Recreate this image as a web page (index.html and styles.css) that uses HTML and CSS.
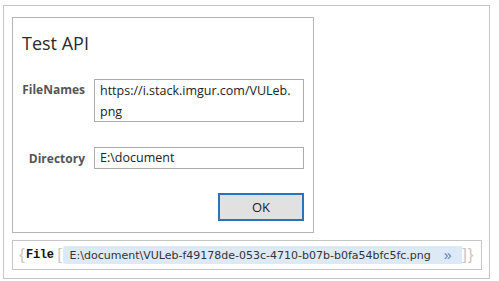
FILE: index.html
```html
<!DOCTYPE html>
<html>

<head>
    <meta charset="UTF-8">
    <title>Test API</title>
    <link rel="stylesheet" href="styles.css">
</head>

<body>
    <div class="frame">
        <form class="dialog">
            <h1 class="dialog-title">Test API</h1>
            <div class="field top">
                <label for="filenames">FileNames</label>
                <div class="textbox multi" id="filenames">https://i.stack.imgur.com/VULeb.<br>png</div>
            </div>
            <div class="field">
                <label for="directory">Directory</label>
                <div class="textbox" id="directory">E:\document</div>
            </div>
            <div class="actions">
                <button type="button" class="btn-ok">OK</button>
            </div>
        </form>

        <div class="result">
            <span class="brace">{</span>
            <span class="key">File</span>
            <span class="bracket">[</span>
            <span class="chip">
                <span class="chip-text">E:\document\VULeb-f49178de-053c-4710-b07b-b0fa54bfc5fc.png</span>
                <span class="chip-more">&raquo;</span>
            </span>
            <span class="bracket">]</span>
            <span class="brace">}</span>
        </div>
    </div>
</body>

</html>
```

FILE: styles.css
```css
/* layout */
body {
    margin: 0;
    font-family: "Open Sans", "Noto Sans", sans-serif;
    color: #333;
    background: #fff;
}

.frame {
    box-sizing: border-box;
    width: 487px;
    height: 274px;
    margin: 5px 0 0 3px;
    padding: 11px 8px 0 8px;
    border: 1px solid #c6c6c6;
}

.dialog {
    box-sizing: border-box;
    width: 302px;
    height: 216px;
    padding: 14px 9px 0 9px;
    border: 1px solid #b4b4b4;
}

.dialog-title {
    margin: 0 0 25px 0;
    font-size: 18px;
    font-weight: normal;
    line-height: 22px;
    color: #2b2b2b;
}

.field {
    display: flex;
    align-items: center;
    gap: 9px;
    margin-bottom: 25px;
}

.field.top {
    align-items: flex-start;
}

.field.top label {
    padding-top: 2px;
}

.field label {
    width: 63px;
    text-align: right;
    font-size: 12px;
    font-weight: bold;
    color: #555;
    white-space: nowrap;
}

.textbox {
    box-sizing: border-box;
    width: 210px;
    height: 22px;
    padding: 0 5px;
    border: 1px solid #acacac;
    font-size: 12.5px;
    line-height: 20px;
    color: #222;
}

.textbox.multi {
    height: 43px;
    line-height: 21px;
}

.actions {
    display: flex;
    justify-content: flex-end;
    margin-top: -1px;
}

.btn-ok {
    box-sizing: border-box;
    width: 86px;
    height: 28px;
    border: 2px solid #2a73b8;
    background: #e1e1e1;
    font-family: "Open Sans", "Noto Sans", sans-serif;
    font-size: 13px;
    color: #222;
}

/* result strip */
.result {
    box-sizing: border-box;
    display: flex;
    align-items: center;
    width: 470px;
    height: 30px;
    margin-top: 7px;
    padding: 0 0 0 6px;
    border: 1px solid #c6c6c6;
}

.brace,
.bracket {
    width: 6px;
    text-align: center;
    font-family: "Liberation Sans", sans-serif;
    font-size: 17px;
    color: #c8c8c8;
}

.key {
    margin: 0 3px 0 1px;
    font-family: "Liberation Mono", monospace;
    font-size: 12px;
    font-weight: bold;
    letter-spacing: -0.3px;
    color: #111;
}

.chip {
    display: flex;
    align-items: center;
    justify-content: space-between;
    box-sizing: border-box;
    width: 399px;
    height: 18px;
    padding: 0 10px 0 7px;
    border-radius: 3px 0 0 3px;
    background: #dde9f6;
}

.chip-text {
    font-family: "DejaVu Sans", Verdana, sans-serif;
    font-size: 11px;
    color: #333;
}

.chip-more {
    font-family: "Liberation Sans", sans-serif;
    font-size: 14px;
    color: #4a82c8;
}
```
